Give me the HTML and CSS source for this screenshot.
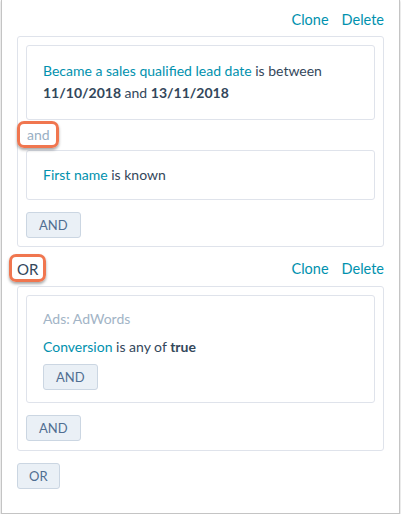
FILE: index.html
```html
<!DOCTYPE html>
<html lang="en">
<head>
    <meta charset="UTF-8">
    <meta name="viewport" content="width=device-width, initial-scale=1.0">
    <title>Filter groups</title>
    <link rel="stylesheet" href="styles.css">
</head>
<body>
    <div class="frame">
        <div class="group-head">
            <span></span>
            <div class="actions">
                <a href="#">Clone</a>
                <a href="#">Delete</a>
            </div>
        </div>
        <div class="group">
            <div class="card card-first">
                <p><a href="#">Became a sales qualified lead date</a> is between <b>11/10/2018</b> and <b>13/11/2018</b></p>
            </div>
            <div class="joiner"><span class="callout">and</span></div>
            <div class="card card-second">
                <p><a href="#">First name</a> is known</p>
            </div>
            <button class="btn">AND</button>
        </div>

        <div class="group-head">
            <span class="or-label callout">OR</span>
            <div class="actions">
                <a href="#">Clone</a>
                <a href="#">Delete</a>
            </div>
        </div>
        <div class="group group-last">
            <div class="card card-ads">
                <p class="muted">Ads: AdWords</p>
                <p class="rule"><a href="#">Conversion</a> is any of <b>true</b></p>
                <button class="btn">AND</button>
            </div>
            <button class="btn">AND</button>
        </div>

        <button class="btn btn-or">OR</button>
    </div>
</body>
</html>
```

FILE: styles.css
```css
body {
    margin: 0;
    background: #fff;
    font-family: Lato, "Open Sans", sans-serif;
    font-size: 14px;
    color: #33475b;
}
a {
    color: #0091ae;
    text-decoration: none;
}
p {
    margin: 0;
    line-height: 22px;
}
b {
    font-weight: bold;
}
.frame {
    width: 399px;
    height: 514px;
    margin-left: 1px;
    padding: 8px 15px 0 15px;
    box-sizing: border-box;
    border: 1px solid #c4c4c4;
    border-top: none;
    box-shadow: 0 1px 2px rgba(0, 0, 0, 0.25);
}
.group-head {
    display: flex;
    justify-content: space-between;
    align-items: center;
    height: 24px;
    line-height: 24px;
    margin-bottom: 4px;
}
.actions {
    display: flex;
    gap: 13px;
    font-size: 14.5px;
}
.group {
    border: 1px solid #dfe3eb;
    border-radius: 3px;
    padding: 8px;
    margin-bottom: 10px;
}
.group-last {
    padding-bottom: 9px;
    margin-bottom: 12px;
}
.group + .group-head {
    margin-bottom: 5px;
}
.card {
    border: 1px solid #dfe3eb;
    border-radius: 3px;
}
.card-first {
    padding: 14px 16px 15px;
}
.card-second {
    padding: 13px 16px 13px;
    margin-bottom: 12px;
}
.card-ads {
    padding: 12px 16px 12px;
    margin-bottom: 12px;
}
.joiner {
    height: 30px;
    line-height: 30px;
}
.callout {
    position: relative;
    display: inline-block;
}
.callout::after {
    content: "";
    position: absolute;
    border: 3px solid #f0764f;
    border-radius: 7px;
    box-shadow: 0 2px 3px rgba(0, 0, 0, 0.35);
}
.joiner .callout {
    color: #99afc4;
    margin-left: 1px;
}
.joiner .callout::after {
    left: -10px;
    right: -9px;
    top: 1px;
    bottom: 2px;
}
.or-label {
    color: #33475b;
    font-size: 15px;
}
.or-label::after {
    left: -8px;
    right: -8px;
    top: -3px;
    bottom: -1px;
}
.muted {
    color: #a2b4c6;
}
.rule {
    margin: 6px 0;
}
.btn {
    display: block;
    height: 26px;
    padding: 0 12px;
    background: #eaf0f6;
    border: 1px solid #cbd6e2;
    border-radius: 3px;
    color: #506e91;
    font-family: Lato, "Open Sans", sans-serif;
    font-size: 13px;
}
.btn-or {
    padding: 0 11px;
}
```
